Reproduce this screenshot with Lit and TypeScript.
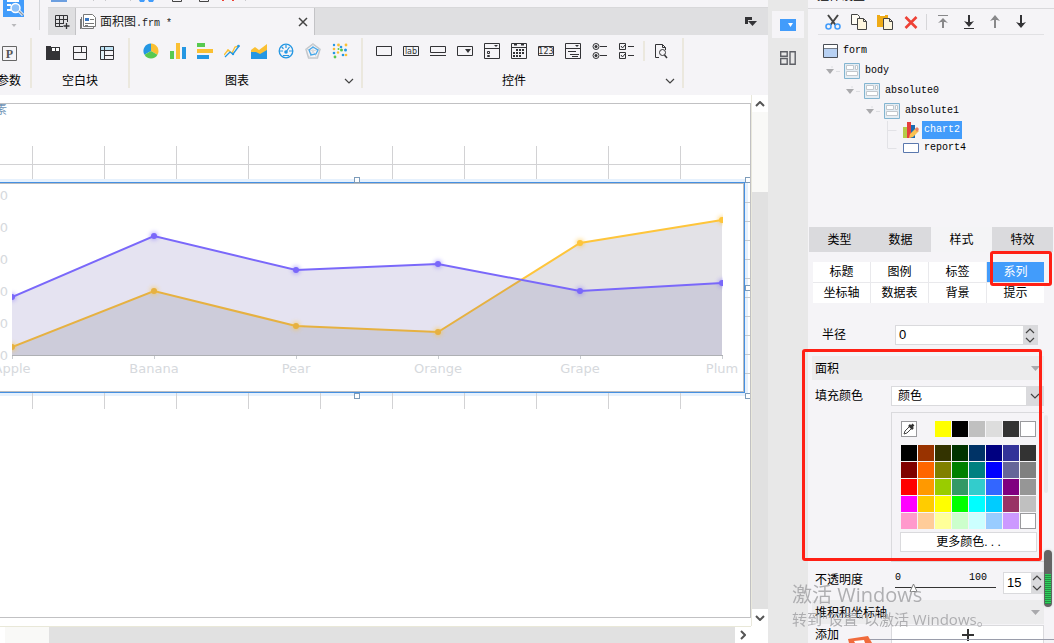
import { LitElement, html, svg, css } from "lit";
import { customElement, state } from "lit/decorators.js";
import { classMap } from "lit/directives/class-map.js";
import { styleMap } from "lit/directives/style-map.js";

const icon = (w: number, h: number, body: unknown) =>
  html`<svg width=${w} height=${h} viewBox="0 0 ${w} ${h}" fill="none" aria-hidden="true">${body}</svg>`;

const chevron = (up = false) =>
  icon(10, 6, svg`<path d=${up ? "M1 5 5 1 9 5" : "M1 1 5 5 9 1"} stroke="#444" stroke-width="1.2"/>`);

const D = "#333336";

const blockIcons = [
  ["标签块", icon(14, 14, svg`<path d="M0 0h5v1h9v13H0z" fill=${D}/><path d="M6 2h3v3H6zM10 2h3v3h-3z" fill="#fff"/>`)],
  ["绝对布局", icon(14, 14, svg`<path d="M.5.5h13v13H.5zM0 6.5h14M8.500 1v5" stroke=${D}/>`)],
  ["表格块", icon(14, 14, svg`<path d="M1 1h12v4H1z" fill="#bfe3f5"/><path d="M1 5h3v8H1z" fill="#e3f3fa"/><path d="M.5.5h13v13H.5zM0 4.500h14M4.500 0v14M4.500 9.500h9" stroke=${D}/>`)],
] as const;

const chartIcons = [
  ["饼图", icon(16, 16, svg`<path d="M8 8V.5A7.500 7.500 0 0 0 1.500 11.800z" fill="#2497e3"/><path d="M8 8V.5a7.500 7.500 0 0 1 6.500 11.200z" fill="#fac033"/><path d="M8 8 1.500 11.800a7.500 7.500 0 0 0 13 0z" fill="#58c950"/>`)],
  ["柱形图", icon(16, 16, svg`<path d="M0 8h4v8H0z" fill="#58c950"/><path d="M6 0h4v16H6z" fill="#fac033"/><path d="M12 4h4v12h-4z" fill="#2497e3"/>`)],
  ["条形图", icon(16, 16, svg`<path d="M0 0h8v4H0z" fill="#58c950"/><path d="M0 6h16v4H0z" fill="#fac033"/><path d="M0 12h12v4H0z" fill="#2497e3"/>`)],
  ["折线图", icon(16, 16, svg`<path d="m0 12 4-5 4 3 3-6 4-1" stroke="#fac033" stroke-width="1.300"/><path d="m1 14 5-5 3 2 6-8" stroke="#2497e3" stroke-width="1.300"/><circle cx="14.500" cy="3" r="1.300" fill="#2497e3"/><circle cx="9" cy="11" r="1.200" fill="#2497e3"/><circle cx="4" cy="7.500" r="1" fill="#fac033"/>`)],
  ["面积图", icon(16, 16, svg`<path d="M0 7 4 4l4 3 8-6v15H0z" fill="#fac033"/><path d="m0 9 5 0 4 2 7-4v9H0z" fill="#2497e3"/>`)],
  ["仪表盘", icon(16, 16, svg`<circle cx="8" cy="8" r="6.800" stroke="#2497e3" stroke-width="1.300"/><path d="M8 2v3M2 8h3M14 8h-3M3.700 4 5.500 5.700M5 12.500h6M8 9l3.500-5" stroke="#2497e3" stroke-width="1.200"/><circle cx="8" cy="9" r="1.800" fill="#2497e3"/>`)],
  ["雷达图", icon(16, 16, svg`<path d="m8 1 7 5.200L12.400 15H3.600L1 6.200z" stroke="#c3c7cb" stroke-width="1.500"/><path d="M8 8V1M8 8l7-2M8 8l4 7M8 8l-4 7M8 8 1 6" stroke="#d5d8db"/><path d="m8 4 5 3-2 4-5 1-2-5z" stroke="#45a8ea" stroke-width="1.300"/>`)],
  ["散点图", icon(16, 16, svg`<g fill="#fac033"><circle cx="6.500" cy="2" r="1.400"/><circle cx="14" cy="2" r="1.400"/><circle cx="2" cy="6" r="1.300"/><circle cx="14" cy="12" r="1.300"/><circle cx="6" cy="9.500" r="1.200"/></g><g fill="#2497e3"><circle cx="2" cy="2" r="1.200"/><circle cx="9" cy="4" r="1.300"/><circle cx="13.500" cy="7" r="1.500"/><circle cx="11" cy="12" r="1.300"/><circle cx="2" cy="10" r="1.300"/></g><g fill="#58c950"><circle cx="9.500" cy="7" r="1.500"/><circle cx="3" cy="14" r="1.400"/><circle cx="6.500" cy="6" r="1"/></g>`)],
] as const;

const widgetIcons = [
  ["文本框", icon(16, 16, svg`<path d="M.5 3.500h15v9H.5z" stroke=${D}/>`)],
  ["标签", icon(16, 16, svg`<path d="M.5 3.500h15v9H.5z" stroke=${D}/><text x="8" y="11" text-anchor="middle" font-size="8" font-family="DejaVu Sans" fill="#333">lab</text>`)],
  ["按钮", icon(16, 16, svg`<path d="M.5 3.500h15v6H.5zM0 12.500h16" stroke=${D}/>`)],
  ["下拉框", icon(16, 16, svg`<path d="M.5 3.500h15v9H.5z" stroke=${D}/><path d="M8 6h6l-3 4z" fill=${D}/>`)],
  ["下拉复选框", icon(16, 16, svg`<path d="M.5.5h15v15H.5zM0 5.500h16M3.500 8.500h2v2h-2zM3.500 12.500h2v1h-2z" stroke=${D}/><path d="M10 2h4l-2 2z" fill=${D}/>`)],
  ["日期", icon(16, 16, svg`<path d="M.5.5h15v15H.5zM0 4.500h16" stroke=${D}/><path d="M3 1.500h3M10 1.500h3" stroke=${D} stroke-width="2"/><path d="M5 7h2M8 7h2M11 7h2M2 10h2M5 10h2M8 10h2M11 10h2M2 13h2M5 13h2M8 13h2" stroke=${D} stroke-width="2"/>`)],
  ["数字", icon(16, 16, svg`<path d="M.5 3.500h15v9H.5z" stroke=${D}/><text x="8" y="11" text-anchor="middle" font-size="8" font-family="DejaVu Sans" fill="#333">123</text>`)],
  ["下拉树", icon(16, 16, svg`<path d="M.5.5h15v15H.5zM0 5.500h16M3 8.500h8M5 11.500h9M7 13.500h6" stroke=${D}/><path d="M10 2h4l-2 2z" fill=${D}/>`)],
  ["单选按钮组", icon(16, 16, svg`<circle cx="4" cy="3.500" r="3" stroke=${D}/><circle cx="4" cy="12.500" r="3" stroke=${D}/><circle cx="4" cy="3.500" r="1.500" fill=${D}/><circle cx="4" cy="12.500" r="1.500" fill=${D}/><path d="M8 3.500h7M8 12.500h7" stroke=${D}/>`)],
  ["复选按钮组", icon(16, 16, svg`<path d="M.5.5h6v6h-6zM.5 9.500h6v6h-6zM9 3.500h6M9 12.500h6" stroke=${D}/><path d="m2 3 1.500 2L6 2M2 12l1.500 2L6 11" stroke=${D}/>`)],
] as const;

const toolIcons = [
  ["剪切", icon(16, 16, svg`<path d="M3 1 10.500 11M13 1 5.500 11" stroke="#444" stroke-width="2"/><circle cx="3.500" cy="12.500" r="2.500" stroke="#429cfb" stroke-width="1.600"/><circle cx="12.500" cy="12.500" r="2.500" stroke="#429cfb" stroke-width="1.600"/>`)],
  ["复制", icon(16, 16, svg`<path d="M.5.5h6l2 2v8h-8z" fill="#fffdf5" stroke="#444"/><path d="M6.500 4.500h6l3 3v8h-9z" fill="#fef6df" stroke="#444"/><path d="M12.500 4.500v3h3" stroke="#444"/>`)],
  ["粘贴", icon(16, 16, svg`<path d="M0 1h11v12H0z" fill="#efab17"/><path d="M3 0h5v2H3z" fill="#fff"/><path d="M6.500 4.500h6l3 3v8h-9z" fill="#fef6df" stroke="#444"/><path d="M12.500 4.500v3h3" stroke="#444"/>`)],
  ["删除", icon(16, 16, svg`<path d="m2.500 3 11 11M13.500 3l-11 11" stroke="#ee4136" stroke-width="2.600"/>`)],
  ["置顶", icon(16, 16, svg`<path d="M3 1.500h10" stroke="#88888a"/><path d="M8 14V5" stroke="#88888a" stroke-width="2"/><path d="M3 9l5-5 5 5-3-1H6z" fill="#88888a"/>`)],
  ["置底", icon(16, 16, svg`<path d="M3 14.500h10" stroke=${D}/><path d="M8 1v10" stroke=${D} stroke-width="2"/><path d="M3 7l5 6 5-6-3 1H6z" fill=${D}/>`)],
  ["上移", icon(16, 16, svg`<path d="M8 14V3" stroke="#88888a" stroke-width="2"/><path d="M3 7l5-6 5 6-3-1H6z" fill="#88888a"/>`)],
  ["下移", icon(16, 16, svg`<path d="M8 1v11" stroke=${D} stroke-width="2"/><path d="M3 8l5 6 5-6-3 1H6z" fill=${D}/>`)],
] as const;

const layoutIcon = icon(16, 16, svg`<path d="M.5.5h15v15H.5z" fill="#e4edf4" stroke="#82b4d0"/><path d="M2.500 2.500h7v4h-7zM11.500 2.500h2v4h-2zM2.500 8.500h11v4h-11z" fill="#fff" stroke="#c3c8cd"/>`);
const formIcon = icon(15, 16, svg`<path d="M.5 1.500h14v13H.5z" fill="#fff" stroke="#4a4f57"/><path d="M1 5h13v9H1z" fill="#b8d1f3"/><path d="M1 5.500h13" stroke="#777f8c"/>`);
const chartIcon = icon(16, 16, svg`<path d="M0 5h4v11H0z" fill="#b5cc49"/><path d="M4 0h4v16H4z" fill="#e5403d"/><path d="M8 3h4v13H8z" fill="#1b6bb3"/><path d="m6 16 1-4 6-6 3 3-6 6z" fill="#f9c152"/><path d="m12 7 2-2 2 2-2 3z" fill="#e98063"/>`);
const reportIcon = icon(16, 16, svg`<path d="M.5 3.500h15v9H.5z" fill="#fff" stroke="#5a78ae"/>`);

const tree = [
  { name: "form", depth: 0, icon: formIcon, open: false },
  { name: "body", depth: 1, icon: layoutIcon, open: true },
  { name: "absolute0", depth: 2, icon: layoutIcon, open: true },
  { name: "absolute1", depth: 3, icon: layoutIcon, open: true },
  { name: "chart2", depth: 4, icon: chartIcon, open: false },
  { name: "report4", depth: 4, icon: reportIcon, open: false },
];

const recent = ["#ffff00", "#000000", "#c0c0c0", "#dddddd", "#333333", "#ffffff"];
const palette = [
  "#000000", "#993300", "#333300", "#003300", "#003366", "#000080", "#333399", "#333333",
  "#800000", "#ff6600", "#808000", "#008000", "#008080", "#0000ff", "#666699", "#808080",
  "#ff0000", "#ff9900", "#99cc00", "#339966", "#33cccc", "#3366ff", "#800080", "#969696",
  "#ff00ff", "#ffcc00", "#ffff00", "#00ff00", "#00ffff", "#00ccff", "#993366", "#c0c0c0",
  "#ff99cc", "#ffcc99", "#ffff99", "#ccffcc", "#ccffff", "#99ccff", "#cc99ff", "#ffffff",
];

const fruits = ["Apple", "Banana", "Pear", "Orange", "Grape", "Plum"];
const stepX = 142;
const px = (i: number) => 12 + i * stepX;
const violet = [297, 236, 270, 264, 291, 283];
const amber = [347, 291, 326, 332, 243, 220];
const baseY = 355;

/* Shared look of every control in the designer. */
const base = css`
  :host { font: 12px/16px "Liberation Sans", "Noto Sans CJK SC", sans-serif; color: #000; }
  * { box-sizing: border-box; }
  svg { display: block; flex: none; }
  button, input, select { font: inherit; color: inherit; margin: 0; padding: 0; border: 0; border-radius: 0; background: none; outline: 0; }
  button { display: flex; align-items: center; justify-content: center; white-space: nowrap; }
`;

@customElement("design-canvas")
class DesignCanvas extends LitElement {
  static styles = [base, css`
    :host { display: block; overflow: hidden; }
    .axis { font: 13px "DejaVu Sans", sans-serif; fill: #d6d9dd; }
    .hint { font: 12px "Noto Sans CJK SC", sans-serif; fill: #6f93b5; }
  `];

  render() {
    const line = (ys: number[]) => ys.map((y, i) => `${px(i)},${y}`);
    const t = (amber[3] - violet[3]) / (amber[3] - violet[3] + violet[4] - amber[4]);
    const cx = px(3) + t * stepX;
    const cy = violet[3] + t * (violet[4] - violet[3]);
    const cross = `${cx},${cy}`;
    const close = ` ${px(5)},${baseY} ${px(0)},${baseY}`;
    const low = [...line(amber).slice(0, 4), cross, ...line(violet).slice(4)];
    const cols = Array.from({ length: 10 }, (_, i) => 32 + i * 72);
    const rows = Array.from({ length: 10 }, (_, i) => 202 + i * 19);
    const handles = [[354, 177], [745, 177], [745, 285], [745, 393], [354, 393]];
    return html`<svg width="750" height="513" viewBox="0 104 750 513" role="img" aria-label="面积图">
      <defs>
        <clipPath id="plot"><path d="M12 180H723V380H12z"/></clipPath>
        <filter id="glow" x="-100%" y="-100%" width="300%" height="300%"><feGaussianBlur stdDeviation="2"/></filter>
      </defs>
      <text class="hint" x="-5" y="114">素</text>
      <path d="M0 164.500H750 ${cols.map((x) => `M${x}.5 146V409`).join("")}" stroke="#d2d2d4" fill="none"/>
      <path d="M0 179H748V396H0z" fill="#e6f1fd"/>
      <path d=${rows.map((y) => `M745 ${y}.5H750`).join("")} stroke="#c6cbd0"/>
      <path d=${cols.map((x) => `M${x}.5 393V409`).join("")} stroke="#d2d2d4"/>
      <path d="M0 182H745V393H0z" fill="#4590e2"/>
      <path d="M0 183H744V392H0z" fill="#b9bcc0"/>
      <path d="M0 184H743V391H0z" fill="#fff"/>
      ${handles.map(([x, y]) => svg`<rect x=${x + 0.5} y=${y + 0.5} width="5" height="5" fill="#fff" stroke="#7d9cba"/>`)}
      <g clip-path="url(#plot)">
        <polygon points=${line(violet).join(" ") + close} fill="#e5e3f1"/>
        <polygon points=${line(amber).join(" ") + close} fill="#e3e2e7"/>
        <polygon points=${low.join(" ") + close} fill="#cdccda"/>
        <g fill="none" stroke-width="2">
          <polyline points=${[...line(amber).slice(0, 4), cross].join(" ")} stroke="#e6b141"/>
          <polyline points=${[cross, ...line(amber).slice(4)].join(" ")} stroke="#fec53b"/>
          <polyline points=${line(violet).join(" ")} stroke="#7a68fa"/>
        </g>
        ${amber.map((y, i) => svg`<circle cx=${px(i)} cy=${y} r="4" fill="#fec53b" opacity=".6" filter="url(#glow)"/><circle cx=${px(i)} cy=${y} r="3" fill=${i < 4 ? "#e6b141" : "#fec53b"}/>`)}
        ${violet.map((y, i) => svg`<circle cx=${px(i)} cy=${y} r="4" fill="#7a68fa" opacity=".5" filter="url(#glow)"/><circle cx=${px(i)} cy=${y} r="3" fill="#7a68fa"/>`)}
      </g>
      <path d="M12 355.500H723" stroke="#aeb0b4"/>
      <path d=${fruits.map((_, i) => `M${px(i)}.5 356V359`).join("")} stroke="#c9ccd0"/>
      ${fruits.map((f, i) => svg`<text class="axis" x=${px(i)} y="373" text-anchor="middle">${f}</text>`)}
      ${Array.from({ length: 6 }, (_, i) => svg`<text class="axis" x="8" y=${200 + i * 32} text-anchor="end">0</text>`)}
    </svg>`;
  }
}

@customElement("widget-tree")
class WidgetTree extends LitElement {
  static styles = [base, css`
    :host { display: block; }
    .tree { list-style: none; margin: 0; padding: 6px 0 0 15px; font: 10px/14px "Liberation Mono", monospace; }
    .row { display: flex; align-items: center; height: 20px; gap: 3px; }
    .leaf { height: 18px; }
    .indent { flex: none; width: 18px; height: 100%; display: flex; align-items: center; justify-content: center; }
    .name { display: flex; align-items: center; height: 18px; padding: 0 2px; }
    .on { background: #429cfb; color: #fff; }
    .d2 { padding-left: 20px; }
    .d3 { padding-left: 40px; }
    .d4 { padding-left: 59px; }
  `];

  render() {
    return html`<ul class="tree">
      ${tree.map((n) => html`<li class=${classMap({ row: true, leaf: n.depth === 4, ["d" + n.depth]: true })}>
        ${n.depth ? html`<span class="indent">${n.open
          ? icon(16, 10, svg`<path d="M8 0v2M12 5.500h4" stroke="#dedee2"/><path d="M2 3h8L6 8z" fill="#a9a9ac"/>`)
          : icon(16, 18, svg`<path d="M4.500 0V${n.name === "chart2" ? 18 : 9}M4.500 9.500h9" stroke="#e2e2e6"/>`)}</span>` : ""}
        ${n.icon}<span class=${classMap({ name: true, on: n.name === "chart2" })}>${n.name}</span>
      </li>`)}
    </ul>`;
  }
}

@customElement("property-panel")
class PropertyPanel extends LitElement {
  @state() private opacity = 15;

  static styles = [base, css`
    :host { display: block; }
    .tabs { display: grid; grid-template-columns: repeat(4, 1fr); height: 25px; padding: 0 1px; }
    .tab { background: #dadadd; }
    .tab.open { background: #f4f4f6; }
    .subtabs { display: grid; grid-template-columns: repeat(4, 1fr); grid-auto-rows: 20px; gap: 1px; margin: 10px 10px 0 5px; background: #e9e9ec; position: relative; }
    .sub { background: #fff; }
    .sub.open { background: #429cfb; color: #fff; }
    .frame { position: absolute; border: 3px solid #ff2015; border-radius: 3px; pointer-events: none; }
    .frame.small { width: 62px; height: 35px; right: -8px; top: -11px; }
    .frame.large { inset: -7px 12px 1px -6px; }
    .spin { display: flex; min-width: 0; height: 20px; border: 1px solid #dadadd; background: #fff; }
    .spin input { flex: 1; width: 0; min-width: 0; padding-left: 3px; font-size: 13px; appearance: textfield; }
    .spin input::-webkit-inner-spin-button { appearance: none; }
    .arrows { flex: none; width: 14px; background: #dadadd; display: grid; grid-template-rows: 1fr 1fr; }
    .radius { display: grid; grid-template-columns: 73px minmax(0, 1fr); align-items: center; margin: 22px 16px 11px 14px; }
    .section { position: relative; }
    .head { display: flex; align-items: center; justify-content: space-between; height: 24px; margin: 0 10px 0 4px; padding: 2px 4px 0 3px; background: #ececed; }
    .line { display: grid; grid-template-columns: 76px minmax(0, 1fr); align-items: center; margin: 6px 10px 0 7px; }
    .select { display: flex; position: relative; }
    .select select { flex: 1; height: 20px; appearance: none; background: #fff; border: 1px solid #dadadd; padding-left: 6px; }
    .drop { position: absolute; right: 0; top: 0; width: 18px; height: 20px; background: #dadadd; display: flex; align-items: center; justify-content: center; pointer-events: none; }
    .picker { margin: 6px 10px 0 83px; border: 1px solid #dadadd; border-right: 0; padding: 8px 7px 8px 8px; height: 150px; }
    .swatches { display: grid; grid-template-columns: repeat(8, 16px); gap: 1px; padding-left: 1px; }
    .all { margin-top: 8px; }
    .swatch { width: 16px; height: 16px; }
    .edged { border: 1px solid #9a9a9d; }
    .pick { background: #fff; }
    .first { grid-column: 3; }
    .more { width: 100%; height: 20px; margin-top: 3px; background: #fff; border: 1px solid #dadadd; }
    .opacity { display: grid; grid-template-columns: 73px 101px 41px; column-gap: 7px; margin: 10px 10px 6px 7px; height: 22px; align-items: start; }
    .scale { display: flex; justify-content: space-between; padding-right: 9px; font: 10px/11px "Liberation Mono", monospace; }
    .slider { display: block; width: 100%; height: 9px; appearance: none; background: linear-gradient(#333, #333) 0 4px / 100% 1px no-repeat; }
    .slider::-webkit-slider-thumb { appearance: none; width: 9px; height: 9px; background: url('data:image/svg+xml,<svg xmlns="http://www.w3.org/2000/svg" width="9" height="9"><path d="M4.5 1 8 8.500H1z" fill="white" stroke="gray"/></svg>'); }
    .tall { height: 22px; }
    .tall .arrows { width: 12px; }
    .add { margin-top: 1px; }
    .plus { height: 20px; background: #fff; border: 1px solid #dadadd; }
  `];

  private spinner(id: string, value: number, tall = false) {
    return html`<div class=${classMap({ spin: true, tall })}>
      <input id=${id} type="number" .value=${String(value)} />
      <div class="arrows"><button aria-label="增加">${chevron(true)}</button><button aria-label="减少">${chevron()}</button></div>
    </div>`;
  }

  private swatch(c: string, first = false) {
    return html`<button class=${classMap({ swatch: true, edged: c === "#ffffff", first })} aria-label=${c} style=${styleMap({ backgroundColor: c })}></button>`;
  }

  render() {
    const triangle = icon(9, 6, svg`<path d="M0 0h9L4.500 5z" fill="#a9a9ac"/>`);
    return html`
      <nav class="tabs">${["类型", "数据", "样式", "特效"].map((t) => html`<button class=${classMap({ tab: true, open: t === "样式" })}>${t}</button>`)}</nav>
      <div class="subtabs">
        ${["标题", "图例", "标签", "系列", "坐标轴", "数据表", "背景", "提示"].map((t) => html`<button class=${classMap({ sub: true, open: t === "系列" })}>${t}</button>`)}
        <div class="frame small"></div>
      </div>
      <div class="radius"><label for="radius">半径</label>${this.spinner("radius", 0)}</div>
      <section class="section">
        <div class="head">面积${triangle}</div>
        <div class="line"><label for="fill">填充颜色</label>
          <div class="select"><select id="fill"><option>颜色</option></select><span class="drop">${chevron()}</span></div>
        </div>
        <div class="picker">
          <div class="swatches">
            <button class="swatch edged pick" aria-label="取色">${icon(14, 14, svg`<path d="m2 12 1-3 5-5 2 2-5 5z" fill="#fff" stroke="#444"/><path d="m7 3 4 4M9 5l2.500-2.500" stroke="#333" stroke-width="2.600"/>`)}</button>
            ${recent.map((c, i) => this.swatch(c, i === 0))}
          </div>
          <div class="swatches all">${palette.map((c) => this.swatch(c))}</div>
          <button class="more">更多颜色. . .</button>
        </div>
        <div class="frame large"></div>
      </section>
      <div class="opacity">
        <label for="opacity">不透明度</label>
        <div><div class="scale"><span>0</span><span>100</span></div>
          <input class="slider" type="range" aria-label="不透明度" min="0" max="100" .value=${String(this.opacity)}
            @input=${(e: Event) => (this.opacity = Number((e.target as HTMLInputElement).value))} /></div>
        ${this.spinner("opacity", this.opacity, true)}
      </div>
      <div class="head">堆积和坐标轴${triangle}</div>
      <div class="line add"><span>添加</span><button class="plus" aria-label="添加">${icon(12, 12, svg`<path d="M6 0v12M0 6h12" stroke="#333" stroke-width="2"/>`)}</button></div>
    `;
  }
}

@customElement("app-root")
class AppRoot extends LitElement {
  static styles = [base, css`
    :host { display: grid; grid-template-columns: minmax(0, 1fr) 40px 246px; grid-template-rows: minmax(0, 1fr); height: 100vh; overflow: hidden; position: relative; background: #f5f4f7; }
    .main { display: flex; flex-direction: column; min-width: 0; }
    .header { display: flex; height: 35px; flex: none; }
    .app { width: 48px; flex: none; }
    .stack { flex: 1; min-width: 0; }
    .quick { height: 7px; }
    .files { display: flex; height: 28px; background: #dfdfe1; border-top: 1px solid #d8d8da; }
    .new { width: 27px; }
    .file { display: flex; align-items: center; gap: 4px; width: 240px; padding: 0 6px 0 4px; background: #f5f4f7; border: solid #c3c3c6; border-width: 0 1px; }
    .file .title { flex: 1; color: #222; }
    .mono { font: 10px "Liberation Mono", monospace; white-space: pre; }
    .list { margin-left: auto; width: 35px; }
    .ribbon { display: flex; height: 60px; flex: none; padding: 3px 0 7px; }
    .group { display: grid; grid-template-rows: 26px 1fr; border-right: 2px solid #ebe8de; }
    .icons { display: flex; align-items: center; padding: 0 13px; gap: 11px; }
    .icons button { width: 16px; height: 16px; }
    .caption { display: flex; align-items: flex-end; line-height: 14px; text-align: center; }
    .caption span { flex: 1; }
    .caption button { width: 10px; height: 14px; margin-right: 7px; }
    .params { width: 44px; margin-left: -12px; }
    .params .icons, .blank .icons { justify-content: center; padding-top: 4px; }
    .blank { width: 98px; }
    .charts { width: 233px; }
    .widgets { width: 321px; }
    .rule { width: 2px; height: 20px; background: #ebe8de; }
    .icons .rule { margin: 0 -3px 0 -3px; }
    .work { flex: 1; min-height: 0; display: grid; grid-template-columns: minmax(0, 1fr) 17px; grid-template-rows: minmax(0, 1fr) 17px; background: #fff; }
    .page { margin: 8px 0; border: solid #c1c1c3; border-width: 1px 1px 1px 0; }
    .vbar { display: flex; flex-direction: column; background: #e1e1e1; border-left: 1px solid #e9e8dc; }
    .vbar button { height: 17px; background: #fff; }
    .vthumb { height: 80px; background: #f9f9f7; }
    .grow { flex: 1; }
    .hbar { display: flex; background: #e1e1e1; border-top: 1px solid #e9e8d8; }
    .hbar button { width: 16px; background: #fff; }
    .hthumb { width: 49px; background: #f9f9f7; border-left: 5px solid #fff; }
    .strip { background: #e8e8e8; padding: 11px 4px; display: flex; flex-direction: column; gap: 6px; }
    .strip button { height: 27px; }
    .strip .open { background: #f5f4f7; }
    .panel { display: flex; flex-direction: column; min-width: 0; position: relative; }
    .name { height: 9px; flex: none; overflow: hidden; display: flex; align-items: flex-end; padding: 0 0 4px 9px; border-bottom: 1px solid #d9d9dc; }
    .tools { display: flex; align-items: center; height: 26px; flex: none; margin: 0 10px; padding: 0 2px; border-bottom: 1px solid #e1e1e4; }
    .tools button { width: 26px; height: 24px; }
    .tools .rule { width: 1px; height: 16px; margin: 0 3px 0 2px; background: #d6d6d9; }
    .nodes { height: 192px; flex: none; }
    .props { flex: none; }
    .groove { position: absolute; right: 6px; top: 415px; width: 4px; height: 78px; border-radius: 2px; background: #e9e9eb; }
    .meter { position: absolute; right: 2px; top: 550px; width: 8px; height: 57px; border-radius: 4px; background: #646464; padding: 24px 1px 3px; box-shadow: 0 0 3px #cfcfcf; }
    .level { height: 100%; background: repeating-linear-gradient(#2fd05c 0 1px, #248d43 1px 2px); }
    .mark { position: absolute; left: 40px; bottom: 0; }
    .notice { position: absolute; right: 68px; bottom: 13px; width: 194px; color: #a3a3a6; opacity: .85; white-space: nowrap; pointer-events: none; font-family: "Open Sans", "Noto Sans CJK SC", sans-serif; }
    .big { font-size: 20px; line-height: 26px; }
    .small { font-size: 15px; line-height: 22px; }
  `];

  private buttons(items: readonly (readonly [string, unknown])[]) {
    return items.map(([label, art]) => html`<button aria-label=${label}>${art}</button>`);
  }

  render() {
    return html`
      <main class="main">
        <header class="header">
          <div class="app">${icon(48, 35, svg`<path d="M3 0h21v17H3z" fill="#429cfb"/><path d="M7 1h12M7 5h4M7 10h4" stroke="#fff" stroke-width="2"/><circle cx="15.500" cy="8" r="4.500" fill="#8cc0f8" stroke="#fff" stroke-width="1.500"/><path d="m19 11 4 4" stroke="#fff" stroke-width="3"/><path d="m19 11 4 4" stroke="#8b98a8" stroke-width="1.500"/><path d="M11.500 24h5L14 27z" fill="#b9b9bc"/><path d="M39.500 0v30" stroke="#d8d8da"/>`)}</div>
          <div class="stack">
            <div class="quick">${icon(200, 3, svg`<path d="M3 0h16v2H3z" fill="#6c9fe0"/><path d="M45.500 0v1M57.500 0v1M82.500 0v1" stroke="#c9c9cc"/><path d="M91 0h6l-1 2h-4zM100 0h6l-1 2h-4z" fill="#429cfb"/><path d="M124.500 0v1.500h9V0M151.500 0v1.500h9V0" stroke="#444"/><path d="M174 0h2v1h-2zM184 0h2v1h-2z" fill="#ee4136"/><path d="M197.500 0v1" stroke="#c9c9cc"/>`)}</div>
            <div class="files">
              <button class="new" aria-label="新建">${icon(16, 16, svg`<path d="M9 12.500H1.500v-11h12V8M1 5.500h13M1 9.500h8M5.500 2v11M9.500 2v8" stroke=${D}/><path d="M12.500 9v6M9.500 12h6" stroke=${D} stroke-width="1.300"/>`)}</button>
              <div class="file">
                ${icon(16, 16, svg`<path d="M3.500.5h9l3 3v9h-12z" fill="#fff" stroke="#777"/><path d="M1.500 3v11.500h12V13M.5 5v10" stroke="#777"/><path d="M5 4h4v3H5z" fill="#3a76c0"/><path d="M10 5.500h4M5 9.500h9M5 11.500h3" stroke="#777"/>`)}
                <span class="title">面积图<span class="mono">.frm *</span></span>
                <button aria-label="关闭">${icon(10, 10, svg`<path d="m1 1 8 8M9 1 1 9" stroke="#444" stroke-width="1.500"/>`)}</button>
              </div>
              <button class="list" aria-label="文件列表">${icon(14, 10, svg`<path d="M1 0h7v3H4v4H1z" fill=${D}/><path d="M4 4h9L8.500 9z" fill=${D}/>`)}</button>
            </div>
          </div>
        </header>
        <div class="ribbon">
          <section class="group params">
            <div class="icons"><button aria-label="参数">${icon(15, 15, svg`<path d="M.5.5h14v14H.5z" stroke="#666"/><text x="7.500" y="12" text-anchor="middle" font-size="12" font-weight="bold" font-family="Liberation Serif" fill="#555">P</text>`)}</button></div>
            <div class="caption"><span>参数</span></div>
          </section>
          <section class="group blank"><div class="icons">${this.buttons(blockIcons)}</div><div class="caption"><span>空白块</span></div></section>
          <section class="group charts"><div class="icons">${this.buttons(chartIcons)}</div><div class="caption"><span>图表</span><button aria-label="更多图表">${chevron()}</button></div></section>
          <section class="group widgets">
            <div class="icons">${this.buttons(widgetIcons)}<div class="rule"></div><button aria-label="预览">${icon(14, 16, svg`<path d="M5 14.500H1.500v-13h7l3 3V7M8.500 1.500v3h3" stroke=${D}/><circle cx="8.500" cy="9.500" r="3" stroke=${D}/><path d="m10.500 12 2.500 3" stroke=${D} stroke-width="1.500"/>`)}</button></div>
            <div class="caption"><span>控件</span><button aria-label="更多控件">${chevron()}</button></div>
          </section>
        </div>
        <div class="work">
          <design-canvas class="page"></design-canvas>
          <div class="vbar"><button aria-label="向上">${icon(10, 6, svg`<path d="M1 5 5 1l4 4" stroke="#555" stroke-width="2"/>`)}</button><div class="vthumb"></div><div class="grow"></div><button aria-label="向下">${icon(10, 6, svg`<path d="m1 1 4 4 4-4" stroke="#555" stroke-width="2"/>`)}</button></div>
          <div class="hbar"><div class="hthumb"></div><div class="grow"></div><button aria-label="向右">${icon(6, 10, svg`<path d="m1 1 4 4-4 4" stroke="#555" stroke-width="2"/>`)}</button></div>
        </div>
      </main>
      <div class="strip">
        <button class="open" aria-label="控件设置">${icon(16, 12, svg`<path d="M0 0h16v12H0z" fill="#429cfb"/><path d="M8 4h5l-2.500 4z" fill="#fff"/>`)}</button>
        <button aria-label="组件库">${icon(16, 14, svg`<path d="M.7.7h6.500v4.500H.7zM.7 7.500h6.500v5.800H.7zM10 .7h5.200v12.600H10z" stroke="#5e6066" stroke-width="1.400"/>`)}</button>
      </div>
      <aside class="panel">
        <div class="name">控件设置</div>
        <div class="tools">${this.buttons(toolIcons.slice(0, 4))}<div class="rule"></div>${this.buttons(toolIcons.slice(4))}</div>
        <widget-tree class="nodes"></widget-tree>
        <property-panel class="props"></property-panel>
        <div class="groove"></div>
        <div class="meter"><div class="level"></div></div>
        <div class="mark">${icon(206, 7, svg`<path d="M22 3.500H206" stroke="#9a9dab"/><path d="m0 3 20-3 4 7H1z" fill="#f06b3c"/><path d="m6 5 10-1 1 3H7z" fill="#fff"/>`)}</div>
      </aside>
      <div class="notice"><div class="big">激活 Windows</div><div class="small">转到"设置"以激活 Windows。</div></div>
    `;
  }
}
